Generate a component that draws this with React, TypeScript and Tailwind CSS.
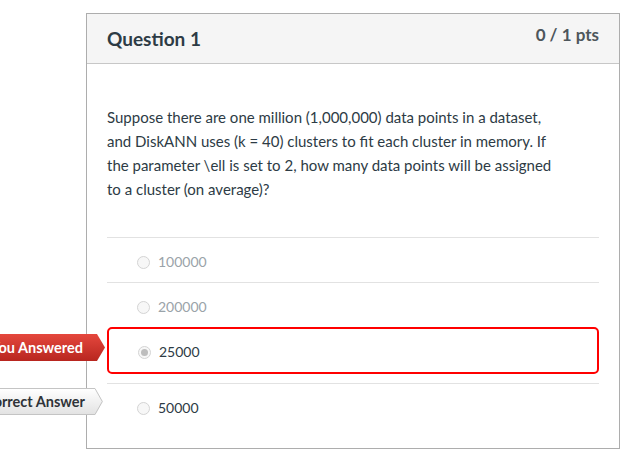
import type { ReactNode } from "react";

type Opt = { label: string; dim?: boolean; picked?: boolean; badge?: "wrong" | "right" };

const OPTIONS: Opt[] = [
  { label: "100000", dim: true },
  { label: "200000", dim: true },
  { label: "25000", picked: true, badge: "wrong" },
  { label: "50000", badge: "right" },
];

// 캔버스 퀴즈 결과 카드 — 왼쪽 화살표 배지는 행에 붙은 오버레이
export default function App() {
  return (
    <div
      className="min-h-[465px] w-[638px] overflow-hidden bg-white"
      style={{ fontFamily: "Lato, 'Open Sans', 'Liberation Sans', sans-serif" }}
    >
      <div className="ml-[86px] mt-[13px] w-[534px] border border-[#adadad] bg-white">
        <div className="flex h-[50px] items-start justify-between border-b border-[#c7c7c7] bg-[#f5f5f5] px-5">
          <h2 className="text-[19px] font-bold leading-[49px] text-[#2d3b45]">Question 1</h2>
          <span className="pt-[10px] text-[17px] font-bold leading-[21px] text-[#4d565c]">0 / 1 pts</span>
        </div>

        <div className="px-5 pb-[17px] pt-[41px]">
          <p className="w-[450px] text-[15px] leading-6 text-[#2d3b45]">
            Suppose there are one million (1,000,000) data points in a dataset, and DiskANN uses (k =
            40) clusters to fit each cluster in memory. If the parameter \ell is set to 2, how many
            data points will be assigned to a cluster (on average)?
          </p>

          <div className="mt-[36px]">
            {OPTIONS.map((o) => (
              <Row key={o.label} opt={o} />
            ))}
          </div>
        </div>
      </div>
    </div>
  );
}

function Row({ opt }: { opt: Opt }) {
  const inner = (
    <div className="flex items-center">
      <Radio picked={opt.picked} />
      <span className={`ml-[8px] text-[14px] leading-5 ${opt.dim ? "text-[#9aa3a9]" : "text-[#2d3b45]"}`}>
        {opt.label}
      </span>
    </div>
  );

  if (opt.picked) {
    return (
      <div className="relative mb-[9px] rounded-[5px] border-2 border-[#ff0000] pb-[10px] pl-[29px] pt-[13px]">
        {opt.badge && <Badge kind={opt.badge} />}
        {inner}
      </div>
    );
  }

  return (
    <div className="relative border-t border-[#e2e2e2] pb-[10px] pl-[30px] pt-[14px] last:pb-[13px]">
      {opt.badge && <Badge kind={opt.badge} />}
      {inner}
    </div>
  );
}

function Radio({ picked }: { picked?: boolean }) {
  return (
    <span className="flex h-[13px] w-[13px] items-center justify-center rounded-full border border-[#d4d4d4] bg-[#f7f7f7]">
      {picked && <span className="h-[7px] w-[7px] rounded-full bg-[#bdbdbd]" />}
    </span>
  );
}

function Badge({ kind }: { kind: "wrong" | "right" }): ReactNode {
  const wrong = kind === "wrong";
  return (
    <div className={`absolute right-full mr-[4px] flex h-[27px] items-stretch ${wrong ? "top-[5px]" : "top-[4px]"}`}>
      <div
        className={`flex items-center whitespace-nowrap pl-3 text-[14.5px] font-bold ${
          wrong
            ? "bg-gradient-to-b from-[#e5473d] to-[#b8261f] pr-[14px] text-white"
            : "border-y border-[#c4c4c4] bg-gradient-to-b from-[#ffffff] to-[#e3e3e3] pr-[10px] text-[#2f3338]"
        }`}
      >
        {wrong ? "You Answered" : "Correct Answer"}
      </div>
      <svg width="8" height="27" viewBox="0 0 8 27" className="block">
        <defs>
          <linearGradient id={`g-${kind}`} x1="0" y1="0" x2="0" y2="1">
            <stop offset="0" stopColor={wrong ? "#e5473d" : "#ffffff"} />
            <stop offset="1" stopColor={wrong ? "#b8261f" : "#e3e3e3"} />
          </linearGradient>
        </defs>
        <polygon points="0,0 8,13.5 0,27" fill={`url(#g-${kind})`} />
        {!wrong && (
          <polyline points="0,0.5 7.3,13.5 0,26.5" fill="none" stroke="#c4c4c4" strokeWidth="1" />
        )}
      </svg>
    </div>
  );
}
